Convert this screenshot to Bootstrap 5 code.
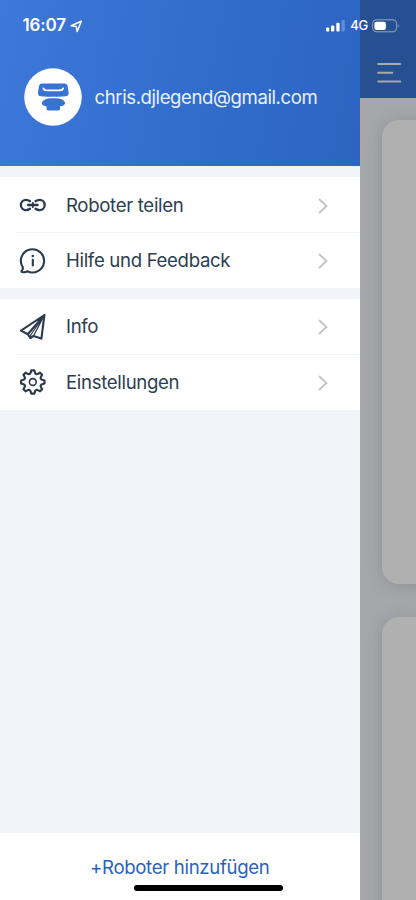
<!DOCTYPE html>
<html lang="de">
<head>
<meta charset="utf-8">
<meta name="viewport" content="width=device-width, initial-scale=1">
<title>Roboter</title>
<link href="https://cdn.jsdelivr.net/npm/bootstrap@5.3.0/dist/css/bootstrap.min.css" rel="stylesheet">
<style>
  body { font-family: Inter, "Liberation Sans", sans-serif; color: #2c3e50; background: #a5a7aa; }
  .screen { width: 416px; height: 900px; }
  .drawer { width: 359.5px; background: #f2f4f9; }
  .drawer-head { height: 166px; padding: 68px 0 0 24px; background: linear-gradient(100deg, #3d78da 0%, #326dcc 55%, #2c64c2 100%); }
  .avatar { width: 58px; height: 58px; }
  .email { margin-left: 12.5px; font-size: 18.6px; color: #eaf2ff; letter-spacing: -.42px; margin-top: 19.5px; }
  .menu-block { margin-top: 11.2px; background: #fff; }
  .menu-row { height: 55.3px; padding-left: 19px; color: inherit; text-decoration: none; }
  .menu-row + .menu-row .row-body::before { content: ""; display: block; height: 1px; background: #f3f4f6; margin-left: -50px; margin-bottom: -1px; }
  .row-icon { width: 28px; height: 28px; margin-top: 1px; }
  .row-body { margin-left: 19px; height: 100%; }
  .row-line { height: 100%; padding: 1.4px 31.5px 0 0; }
  .label { font-size: 18.6px; letter-spacing: -.32px; }
  .add-bar { height: 67px; background: #fff; }
  .add-link { color: #2962bd; font-size: 18.6px; letter-spacing: -.32px; margin-top: 19.5px; line-height: 28px; }
  .home-line { width: 149px; height: 5.5px; left: 134px; top: 885.3px; background: #000; }
  .backdrop-head { height: 97.5px; background: #265091; padding: 62px 0 0 17px; }
  .page-card { width: 60px; background: #b0b0b0; border-radius: 17px 0 0 17px; margin-left: 22.5px; box-shadow: 0 2px 16px rgba(75,80,90,.25); }
  .card-one { height: 463.5px; margin-top: 22.6px; }
  .card-two { height: 320px; margin-top: 33px; }
  .status { height: 52px; padding: 0 16px 0 22.5px; color: #fff; }
  .clock { font-size: 17px; font-weight: 600; letter-spacing: -.15px; }
  .network { font-size: 13px; font-weight: 500; letter-spacing: -.2px; }
</style>
</head>
<body>
<div class="screen position-relative overflow-hidden d-flex">
  <aside class="drawer d-flex flex-column flex-shrink-0">
    <header class="drawer-head d-flex align-items-start">
      <svg class="avatar flex-shrink-0" viewBox="0 0 58 58">
        <circle cx="29" cy="29" r="28.8" fill="#fff"/>
        <path d="M18.5 15.5H40Q43.3 15.5 43.7 18.5L44.6 24.5Q45 28 41.5 28.2Q29 29.5 17 28.2Q13.6 28 14 24.5L14.9 18.5Q15.3 15.5 18.5 15.5Z" fill="#3872d3"/>
        <path d="M19.3 20.4Q20 22.4 22.5 22.4H36Q38.5 22.4 39.2 20.4" fill="none" stroke="#fff" stroke-width="1.8" stroke-linecap="round"/>
        <path d="M18 34.2Q20.5 30.3 27 30.3H32Q38.5 30.3 41 34.2Q41.7 35.6 40.3 36.7Q38.5 38.2 36 38.2V40.8Q36 42.6 34.5 42.6H24Q22.5 42.6 22.5 40.8V38.2Q20 38 18.3 36.7Q17.3 35.5 18 34.2Z" fill="#3872d3"/>
      </svg>
      <span class="email lh-1">chris.djlegend@gmail.com</span>
    </header>

    <nav class="menu-block">
      <a class="menu-row d-flex align-items-center" href="#">
        <svg class="row-icon flex-shrink-0" viewBox="0 0 28 28" fill="none" stroke="#2c3b4c" stroke-width="2.3" stroke-linecap="round">
          <path d="M11 10.2Q9.2 8.9 7 8.9A5.1 5.1 0 0 0 7 19.1Q9.2 19.1 11 17.8M16.6 10.2Q18.4 8.9 20.6 8.9A5.1 5.1 0 0 1 20.6 19.1Q18.4 19.1 16.6 17.8M9 14H18.6"/><path d="M13.8 12V16" stroke-width="2"/>
        </svg>
        <div class="row-body flex-grow-1"><div class="row-line d-flex align-items-center justify-content-between"><span class="label">Roboter teilen</span>
          <svg width="10" height="16" viewBox="0 0 10 16"><path d="M1 1L8.5 8L1 15" fill="none" stroke="#c3c3c3" stroke-width="1.8"/></svg></div></div>
      </a>
      <a class="menu-row d-flex align-items-center" href="#">
        <svg class="row-icon flex-shrink-0" viewBox="0 0 28 28" fill="none" stroke="#2c3b4c" stroke-width="2.1" stroke-linecap="round" stroke-linejoin="round">
          <path d="M3.7 20.1A11.6 11.6 0 1 1 8.2 24.2Q6.5 25.8 3.2 25Q1.8 24.5 3 23.4Q4.3 22 3.7 20.1Z"/>
          <path d="M13.8 12.8V18.5"/><circle cx="13.8" cy="9" r="1.3" fill="#2c3b4c" stroke="none"/>
        </svg>
        <div class="row-body flex-grow-1"><div class="row-line d-flex align-items-center justify-content-between"><span class="label">Hilfe und Feedback</span>
          <svg width="10" height="16" viewBox="0 0 10 16"><path d="M1 1L8.5 8L1 15" fill="none" stroke="#c3c3c3" stroke-width="1.8"/></svg></div></div>
      </a>
    </nav>

    <nav class="menu-block">
      <a class="menu-row d-flex align-items-center" href="#">
        <svg class="row-icon flex-shrink-0" viewBox="0 0 28 28" fill="none" stroke="#2c3b4c" stroke-width="2.1" stroke-linecap="round" stroke-linejoin="round">
          <path d="M25.4 2L2 17.6L8.8 21.2L11.3 25L14.5 23L22.4 25.6ZM25.4 2L8.8 21.2"/><path d="M25.4 2L11.7 22V25M25.4 2L14.5 23" stroke-width="1.3"/>
        </svg>
        <div class="row-body flex-grow-1"><div class="row-line d-flex align-items-center justify-content-between"><span class="label">Info</span>
          <svg width="10" height="16" viewBox="0 0 10 16"><path d="M1 1L8.5 8L1 15" fill="none" stroke="#c3c3c3" stroke-width="1.8"/></svg></div></div>
      </a>
      <a class="menu-row d-flex align-items-center" href="#">
        <svg class="row-icon flex-shrink-0" viewBox="-13.8 -14 28 28" fill="none" stroke="#2c3b4c" stroke-width="2.2" stroke-linejoin="round">
          <path d="M-1.5 -11.7H1.5L2.2 -9.3Q3.2 -7.2 5.02 -8.13L7.21 -9.33L9.33 -7.21L8.13 -5.02Q7.2 -3.2 9.3 -2.2L11.7 -1.5V1.5L9.3 2.2Q7.2 3.2 8.13 5.02L9.33 7.21L7.21 9.33L5.02 8.13Q3.2 7.2 2.2 9.3L1.5 11.7H-1.5L-2.2 9.3Q-3.2 7.2 -5.02 8.13L-7.21 9.33L-9.33 7.21L-8.13 5.02Q-7.2 3.2 -9.3 2.2L-11.7 1.5V-1.5L-9.3 -2.2Q-7.2 -3.2 -8.13 -5.02L-9.33 -7.21L-7.21 -9.33L-5.02 -8.13Q-3.2 -7.2 -2.2 -9.3Z"/><circle r="3.4" stroke-width="1.6"/>
        </svg>
        <div class="row-body flex-grow-1"><div class="row-line d-flex align-items-center justify-content-between"><span class="label">Einstellungen</span>
          <svg width="10" height="16" viewBox="0 0 10 16"><path d="M1 1L8.5 8L1 15" fill="none" stroke="#c3c3c3" stroke-width="1.8"/></svg></div></div>
      </a>
    </nav>

    <footer class="add-bar mt-auto text-center">
      <a class="add-link d-inline-block text-decoration-none" href="#">+Roboter hinzufügen</a>
    </footer>
  </aside>

  <main class="flex-grow-1 overflow-hidden">
    <div class="backdrop-head">
      <svg class="d-block" width="25" height="22" viewBox="0 0 25 22"><path d="M1.2 2H23.2M1.2 10.8H15.3M1.2 19.5H23.2" stroke="#aaa9aa" stroke-width="2" stroke-linecap="round"/></svg>
    </div>
    <div class="page-card card-one"></div>
    <div class="page-card card-two"></div>
  </main>

  <div class="status position-absolute top-0 start-0 w-100 d-flex align-items-center">
    <span class="clock">16:07</span>
    <svg class="ms-1" width="13" height="13" viewBox="0 0 13 13"><path d="M11.3 1.3L1.2 5.8L6.2 6.6L7.2 11.5Z" fill="none" stroke="#fff" stroke-width="1.5" stroke-linejoin="round"/></svg>
    <svg class="ms-auto" width="20" height="12" viewBox="0 0 20 12"><g fill="#fff"><rect x="0" y="7.5" width="3.3" height="4" rx="1"/><rect x="5" y="5.5" width="3.3" height="6" rx="1"/><rect x="10.3" y="2.8" width="3.3" height="8.7" rx="1"/><rect x="15.5" y="0" width="3.3" height="11.5" rx="1" opacity=".25"/></g></svg>
    <span class="network ms-1">4G</span>
    <svg class="ms-1" width="28" height="14" viewBox="0 0 28 14"><rect x=".6" y=".8" width="24" height="12" rx="3.6" fill="none" stroke="#8fa3c5" stroke-width="1"/><rect x="2.4" y="2.7" width="11.5" height="8.3" rx="2" fill="#fff"/><path d="M26 4.8Q27.6 6.8 26 8.8Z" fill="#8fa3c5"/></svg>
  </div>
  <div class="home-line position-absolute rounded-pill"></div>
</div>
<script src="https://cdn.jsdelivr.net/npm/bootstrap@5.3.0/dist/js/bootstrap.bundle.min.js"></script>
</body>
</html>
